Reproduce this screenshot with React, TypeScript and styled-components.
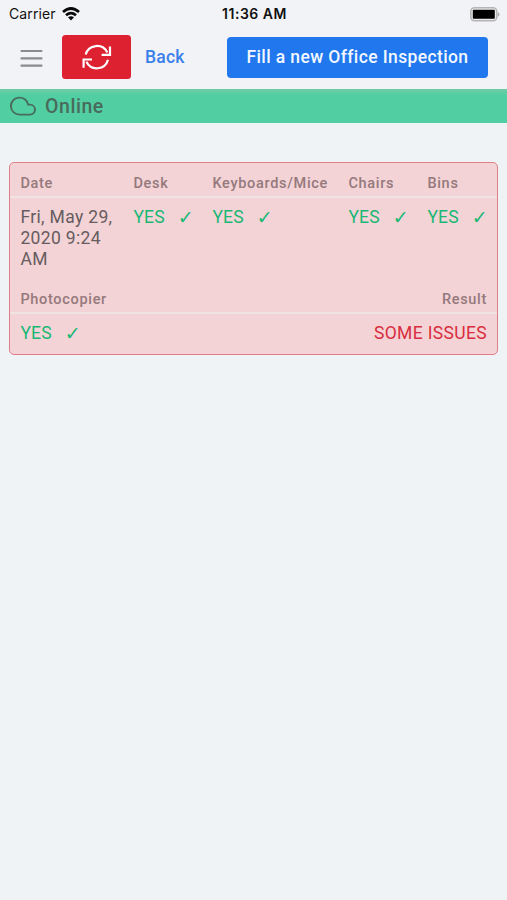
import React from 'react';
import styled, { createGlobalStyle } from 'styled-components';

const GlobalStyle = createGlobalStyle`
  *, *::before, *::after { box-sizing: border-box; }
  body { margin: 0; background: #f1f3f5; font-family: Roboto, sans-serif; }
`;

const Screen = styled.main`
  width: 507px;
  height: 900px;
  background: #f0f3f5;
  color: #5c5557;
  overflow: hidden;
`;

const StatusBar = styled.div`
  height: 28px;
  display: grid;
  grid-template-columns: 1fr auto 1fr;
  align-items: center;
  padding: 0 7px 0 9px;
  background: #f2f3f6;
  color: #111;
  font: 400 14.5px/28px Inter, sans-serif;
`;

const Carrier = styled.div`
  display: flex;
  align-items: center;
  gap: 6px;
`;

const CarrierName = styled.span`
  font-size: 14px;
  letter-spacing: 0.12px;
`;

const Clock = styled.span`
  font-size: 14px;
  font-weight: 600;
  letter-spacing: 0.5px;
`;

const BatteryIcon = styled.svg`
  justify-self: end;
`;

const Toolbar = styled.header`
  height: 61px;
  display: flex;
  align-items: flex-start;
  padding: 7px 19px 0 20px;
  background: #f2f3f6;
`;

const MenuIcon = styled.svg`
  margin: 13px 19px 0 0;
`;

const SyncButton = styled.button`
  width: 69px;
  height: 44px;
  padding: 0;
  border: 0;
  border-radius: 3.5px;
  background: #dd2131;
  display: grid;
  place-items: center;
`;

const BackButton = styled.button`
  height: 44px;
  margin-left: 14px;
  padding: 0;
  border: 0;
  background: none;
  color: #3b7fea;
  font: 500 17.5px/44px Roboto, sans-serif;
  letter-spacing: 0.25px;
`;

const FillButton = styled.button`
  width: 261px;
  height: 41px;
  margin: 2px 0 0 auto;
  padding: 0;
  border: 0;
  border-radius: 4px;
  background: #2077ee;
  color: #f3f7ff;
  font: 500 17.5px/39px Roboto, sans-serif;
  letter-spacing: 0.38px;
  white-space: nowrap;
`;

const OnlineBar = styled.div`
  height: 34px;
  display: flex;
  align-items: center;
  gap: 9px;
  padding-left: 10px;
  background: linear-gradient(#73cba6, #52cfa2 6px);
  color: #496b5c;
  font-size: 19.5px;
  font-weight: 500;
  letter-spacing: 0.55px;
`;

const Card = styled.section`
  width: 489px;
  height: 193px;
  margin: 39px 0 0 9px;
  border: 1.5px solid #e07f87;
  border-radius: 5px;
  background: #f3d3d5;
`;

const RecordGrid = styled.div<{ $columns: string; $bodyHeight: number }>`
  display: grid;
  grid-template-columns: ${p => p.$columns};
  grid-template-rows: 35px ${p => p.$bodyHeight}px;
`;

const Heading = styled.div<{ $end?: boolean }>`
  padding: 6px 10px 0 10.4px;
  border-bottom: 2px solid #f0e4e2;
  color: #95797d;
  font-size: 14.5px;
  font-weight: 500;
  line-height: 29px;
  letter-spacing: 0.69px;
  text-align: ${p => (p.$end ? 'right' : 'left')};
`;

const Value = styled.div<{ $tone?: string; $end?: boolean }>`
  padding: 9px 0 0 10.4px;
  padding-right: ${p => (p.$end ? 10 : 0)}px;
  color: ${p => p.$tone || '#675c5f'};
  font-size: 17.5px;
  line-height: 21px;
  letter-spacing: 0.35px;
  text-align: ${p => (p.$end ? 'right' : 'left')};
`;

const Answer = styled.span`
  display: flex;
  gap: 13px;
  letter-spacing: 0.2px;
`;

const Tick = styled.span`
  font: 19px/21px "DejaVu Sans", sans-serif;
`;

const Yes = () => (
  <Value $tone="#1ab875">
    <Answer>YES <Tick>✓</Tick></Answer>
  </Value>
);

const checks = ['Desk', 'Keyboards/Mice', 'Chairs', 'Bins'];

export default function App() {
  return (
    <>
      <GlobalStyle />
      <Screen>
        <StatusBar>
          <Carrier>
            <CarrierName>Carrier</CarrierName>
            <svg width="18" height="14" viewBox="0 0 18 14" fill="none" stroke="#090909" strokeWidth="2.7">
              <path d="M1 5Q9-2 17 5M4 8.2Q9 4 14 8.2" />
              <path d="M6 10.3Q9 8 12 10.3L9 13.4Z" fill="#090909" stroke="none" />
            </svg>
          </Carrier>
          <Clock>11:36 AM</Clock>
          <BatteryIcon width="30" height="15" viewBox="0 0 30 15">
            <rect x=".8" y=".8" width="26" height="13" rx="3.8" fill="#ececec" stroke="#b5b5b5" strokeWidth="1.6" />
            <rect x="2.8" y="2.8" width="22" height="9" rx="1" />
            <path d="M28 5.3Q31 7.5 28 9.7Z" fill="#aaa" />
          </BatteryIcon>
        </StatusBar>
        <Toolbar>
          <MenuIcon width="23" height="20" viewBox="0 0 23 20" stroke="#8b8b8e" strokeWidth="2.2" strokeLinecap="round">
            <path d="M1.5 3H21.5M1.5 10.4H21.5M1.5 17.7H21.5" />
          </MenuIcon>
          <SyncButton aria-label="Sync">
            <svg width="32" height="28" viewBox="0 0 32 28" fill="none" stroke="#fff" strokeWidth="2.2">
              <path d="M4.7 11.5A11.6 11.6 0 0 1 26.3 9.5M29 3.5V11.8H20.6M27 16.8A11.6 11.6 0 0 1 5.4 18.8M2.6 24.8V16.5H11" />
            </svg>
          </SyncButton>
          <BackButton>Back</BackButton>
          <FillButton>Fill a new Office Inspection</FillButton>
        </Toolbar>
        <OnlineBar>
          <svg width="26" height="20" viewBox="0 0 26 20" fill="none" stroke="#496b5c" strokeWidth="1.9">
            <path d="M20 8.6H18.2A8.7 8.5 0 1 0 9.8 18.6H20A5 5 0 0 0 20 8.6Z" />
          </svg>
          Online
        </OnlineBar>
        <Card>
          <RecordGrid $columns="113px 79px 136px 79px 1fr" $bodyHeight={81}>
            <Heading>Date</Heading>
            {checks.map(c => <Heading key={c}>{c}</Heading>)}
            <Value>Fri, May 29,<br />2020 9:24<br />AM</Value>
            {checks.map(c => <Yes key={c} />)}
          </RecordGrid>
          <RecordGrid $columns="1fr 1fr" $bodyHeight={41}>
            <Heading>Photocopier</Heading>
            <Heading $end>Result</Heading>
            <Yes />
            <Value $tone="#d92d40" $end>SOME ISSUES</Value>
          </RecordGrid>
        </Card>
      </Screen>
    </>
  );
}
